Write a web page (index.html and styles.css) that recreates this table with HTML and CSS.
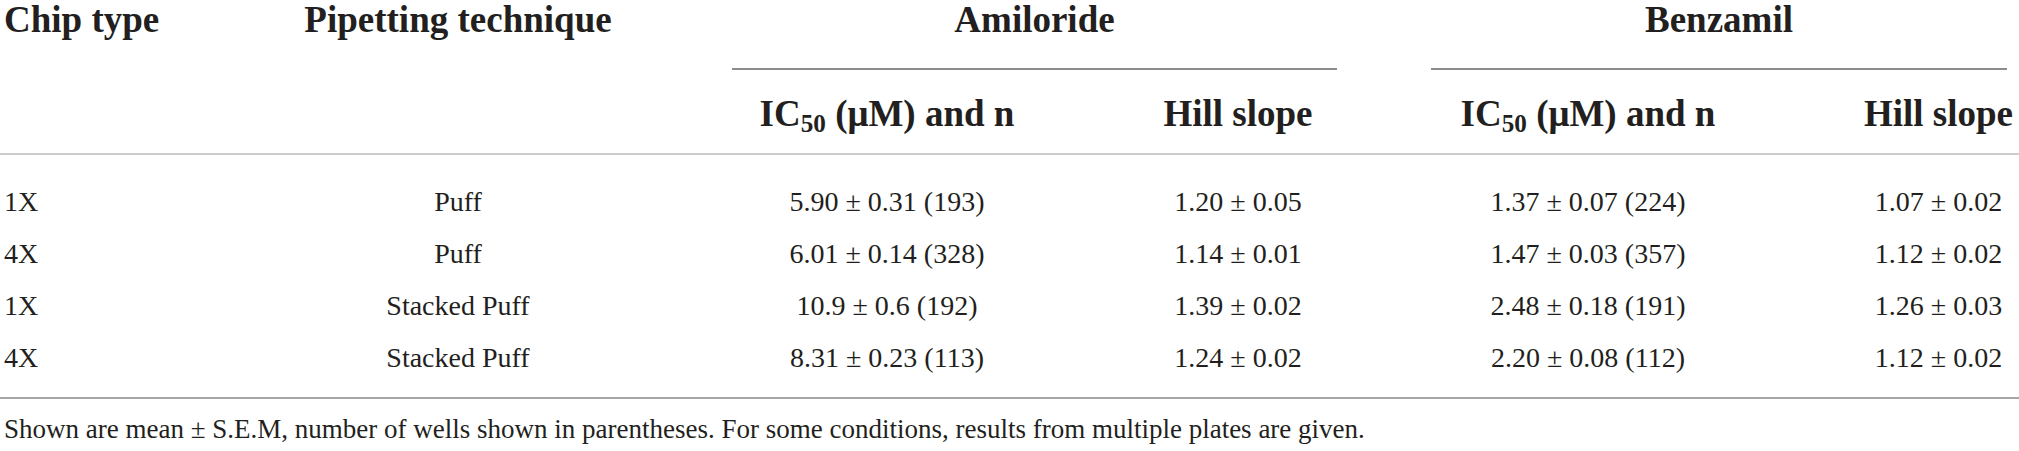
FILE: index.html
```html
<!DOCTYPE html>
<html lang="en">
<head>
<meta charset="utf-8">
<title>IC50 table</title>
<link rel="stylesheet" href="styles.css">
</head>
<body>
<div class="wrap">
  <table class="data">
    <colgroup>
      <col class="c1"><col class="c2"><col class="c3"><col class="c4"><col class="c5"><col class="c6">
    </colgroup>
    <thead>
      <tr>
        <th class="h-top h-left" rowspan="2">Chip type</th>
        <th class="h-top" rowspan="2">Pipetting technique</th>
        <th class="h-group" colspan="2"><div class="group-title amil">Amiloride</div></th>
        <th class="h-group" colspan="2"><div class="group-title benz">Benzamil</div></th>
      </tr>
      <tr>
        <th class="h-sub">IC<span class="sub">50</span> (μM) and n</th>
        <th class="h-sub">Hill slope</th>
        <th class="h-sub">IC<span class="sub">50</span> (μM) and n</th>
        <th class="h-sub last-col">Hill slope</th>
      </tr>
    </thead>
    <tbody>
      <tr>
        <td class="left">1X</td><td>Puff</td><td>5.90 ± 0.31 (193)</td><td>1.20 ± 0.05</td><td>1.37 ± 0.07 (224)</td><td class="last-col">1.07 ± 0.02</td>
      </tr>
      <tr>
        <td class="left">4X</td><td>Puff</td><td>6.01 ± 0.14 (328)</td><td>1.14 ± 0.01</td><td>1.47 ± 0.03 (357)</td><td class="last-col">1.12 ± 0.02</td>
      </tr>
      <tr>
        <td class="left">1X</td><td>Stacked Puff</td><td>10.9 ± 0.6 (192)</td><td>1.39 ± 0.02</td><td>2.48 ± 0.18 (191)</td><td class="last-col">1.26 ± 0.03</td>
      </tr>
      <tr>
        <td class="left">4X</td><td>Stacked Puff</td><td>8.31 ± 0.23 (113)</td><td>1.24 ± 0.02</td><td>2.20 ± 0.08 (112)</td><td class="last-col">1.12 ± 0.02</td>
      </tr>
    </tbody>
  </table>
  <p class="note">Shown are mean ± S.E.M, number of wells shown in parentheses. For some conditions, results from multiple plates are given.</p>
</div>
</body>
</html>
```

FILE: styles.css
```css
html, body {
  margin: 0;
  padding: 0;
  background: #ffffff;
  overflow: hidden;
}

body {
  font-family: "Liberation Serif", "Times New Roman", serif;
  color: #231f20;
}

.wrap {
  width: 2019px;
}

.data {
  width: 2019px;
  table-layout: fixed;
  border-collapse: separate;
  border-spacing: 0;
}

.c1 { width: 230px; }
.c2 { width: 456px; }
.c3 { width: 402px; }
.c4 { width: 300px; }
.c5 { width: 400px; }
.c6 { width: 231px; }

th {
  font-weight: bold;
  font-size: 37px;
  line-height: 40px;
  text-align: center;
  padding: 0;
  white-space: nowrap;
}

.h-top {
  vertical-align: top;
  border-bottom: 2px solid #cccccc;
}

.h-left {
  text-align: left;
  padding-left: 4px;
}

.h-group {
  vertical-align: top;
}

.group-title {
  padding-bottom: 28px;
  border-bottom: 2px solid #8c8c8c;
}

.group-title.amil {
  margin: 0 51px 0 46px;
}

.group-title.benz {
  margin: 0 12px 0 43px;
}

.h-sub {
  padding: 24px 0 19px;
  border-bottom: 2px solid #cccccc;
}

.sub {
  font-size: 0.68em;
  vertical-align: -0.22em;
  line-height: 0;
}

td {
  font-size: 28px;
  line-height: 32px;
  text-align: center;
  padding: 10px 0;
  white-space: nowrap;
}

td.left {
  text-align: left;
  padding-left: 4px;
}

.last-col {
  padding-left: 70px;
}

tbody tr:first-child td {
  padding-top: 31px;
}

tbody tr:last-child td {
  padding-bottom: 23px;
  border-bottom: 2px solid #a6a6a6;
}

.note {
  margin: 0;
  padding: 15px 0 0 4px;
  font-size: 27px;
  line-height: 30px;
  white-space: nowrap;
}
```
